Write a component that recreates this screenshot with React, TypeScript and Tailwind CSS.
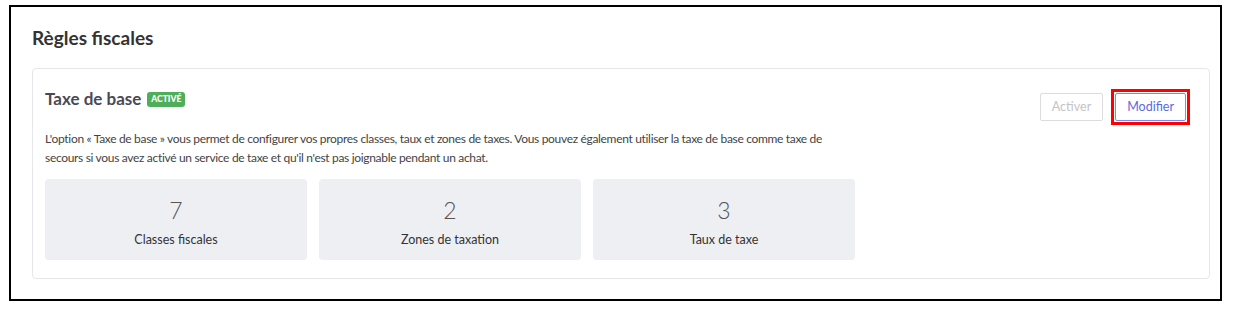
const stats = [
  { value: '7', label: 'Classes fiscales' },
  { value: '2', label: 'Zones de taxation' },
  { value: '3', label: 'Taux de taxe' },
];

export default function App() {
  return (
    <div className="h-[310px] w-[1233px] bg-white font-['Lato',sans-serif]">
      <div className="ml-[9px] pt-[5px]">
        <div className="h-[296px] w-[1213px] border-2 border-black pl-[21px] pr-[10px] pt-[17px]">
          <h1 className="text-[19px] font-bold leading-[28px] text-[#333]">Règles fiscales</h1>

          <div className="mt-[16px] h-[211px] rounded-[4px] border border-[#e6e6ec] px-[12px] pt-[14px]">
            <div className="flex items-start justify-between">
              <div className="flex items-center gap-[6px] pt-[4px]">
                <span className="text-[17px] font-bold leading-[24px] text-[#4a4a55]">Taxe de base</span>
                <span className="rounded-[3px] bg-[#4fae5a] px-[4px] text-[8.5px] font-black leading-[15px] text-white">
                  ACTIVÉ
                </span>
              </div>
              <div className="mr-[11px] flex items-center gap-[12px] pt-[10px]">
                <button className="h-[28px] rounded-[2px] border border-[#dcdcdc] bg-white px-[11px] text-[12.5px] text-[#c4c4c4]">
                  Activer
                </button>
                <div className="-m-[4px] border-[3px] border-[#ff0000] p-[1px]">
                  <button className="h-[28px] rounded-[2px] border border-[#7d8af2] bg-white px-[11px] text-[12.5px] text-[#5a6ae6]">
                    Modifier
                  </button>
                </div>
              </div>
            </div>

            <p className="mt-[8px] whitespace-nowrap text-[12px] leading-[19px] tracking-[-0.32px] text-[#444]">
              L'option « Taxe de base » vous permet de configurer vos propres classes, taux et zones de taxes. Vous pouvez également utiliser la taxe de base comme taxe de
              <br />
              secours si vous avez activé un service de taxe et qu'il n'est pas joignable pendant un achat.
            </p>

            <div className="mt-[12px] flex gap-[12px]">
              {stats.map((s) => (
                <div
                  key={s.label}
                  className="flex h-[81px] w-[262px] flex-col items-center rounded-[4px] bg-[#eeeff3] pt-[18px]"
                >
                  <span className="text-[23px] font-light leading-[26px] text-[#555]">{s.value}</span>
                  <span className="mt-[9px] text-[12.5px] leading-[16px] text-[#333]">{s.label}</span>
                </div>
              ))}
            </div>
          </div>
        </div>
      </div>
    </div>
  );
}
